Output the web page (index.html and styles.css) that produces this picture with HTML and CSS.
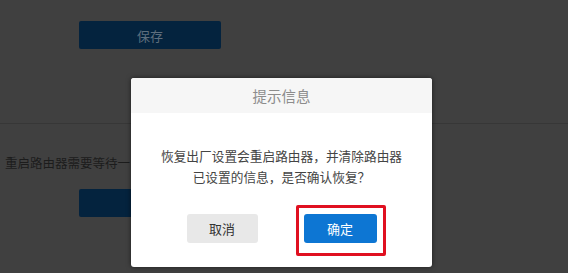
FILE: index.html
```html
<!DOCTYPE html>
<html lang="zh-CN">
<head>
<meta charset="utf-8">
<title>提示信息</title>
<link rel="stylesheet" href="styles.css">
</head>
<body>
<div class="page">
  <div class="section">
    <button class="btn-primary dim">保存</button>
  </div>
  <div class="divider"></div>
  <div class="section lower">
    <p class="note">重启路由器需要等待一</p>
    <button class="btn-primary dim"></button>
  </div>
</div>
<div class="dialog">
  <div class="dialog-head">提示信息</div>
  <div class="dialog-body">
    <p class="msg">恢复出厂设置会重启路由器，并清除路由器<br>已设置的信息，是否确认恢复？</p>
    <div class="actions">
      <button class="btn btn-cancel">取消</button>
      <button class="btn btn-ok">确定</button>
    </div>
  </div>
</div>
</body>
</html>
```
FILE: styles.css
```css
html, body {
  margin: 0;
  padding: 0;
}
body {
  width: 568px;
  height: 273px;
  overflow: hidden;
  background: #404040;
  font-family: "Noto Sans CJK SC", "Noto Sans", sans-serif;
  position: relative;
}
.page {
  display: flex;
  flex-direction: column;
}
.section {
  padding: 21px 0 0 79px;
}
.btn-primary {
  display: block;
  width: 142px;
  height: 28px;
  border: 0;
  border-radius: 2px;
  font-family: inherit;
  font-size: 13px;
  padding: 0;
}
.dim {
  background: #04233e;
  color: #5e6e7d;
}
.divider {
  margin-top: 74px;
  height: 1px;
  background: #373737;
}
.lower {
  padding: 30px 0 0 5px;
}
.note {
  margin: 0;
  width: 125px;
  overflow: hidden;
  font-size: 12.5px;
  line-height: 18px;
  color: #1c1c1c;
  white-space: nowrap;
}
.lower .btn-primary {
  margin: 17px 0 0 74px;
}
.dialog {
  position: absolute;
  left: 131px;
  top: 78px;
  width: 301px;
  height: 189px;
  background: #ffffff;
  border-radius: 3px;
  box-shadow: 0 0 5px rgba(0, 0, 0, 0.55);
}
.dialog-head {
  height: 35px;
  line-height: 36px;
  background: #f6f6f6;
  border-radius: 3px 3px 0 0;
  text-align: center;
  font-size: 14.5px;
  color: #8c8c8c;
}
.dialog-body {
  padding-top: 32px;
}
.msg {
  margin: 0;
  text-align: center;
  font-size: 12.7px;
  line-height: 21px;
  color: #444444;
}
.actions {
  display: flex;
  justify-content: center;
  gap: 46px;
  margin-top: 27px;
}
.btn {
  height: 29px;
  border: 0;
  border-radius: 3px;
  font-family: inherit;
  font-size: 13px;
  padding: 0;
}
.btn-cancel {
  width: 71px;
  background: #e8e8e8;
  color: #333333;
}
.btn-ok {
  width: 73px;
  background: #0d76d3;
  color: #ffffff;
  position: relative;
}
.btn-ok::after {
  content: "";
  position: absolute;
  left: -8px;
  top: -9px;
  right: -9px;
  bottom: -13px;
  border: 3px solid #e01020;
  border-radius: 2px;
}
```
